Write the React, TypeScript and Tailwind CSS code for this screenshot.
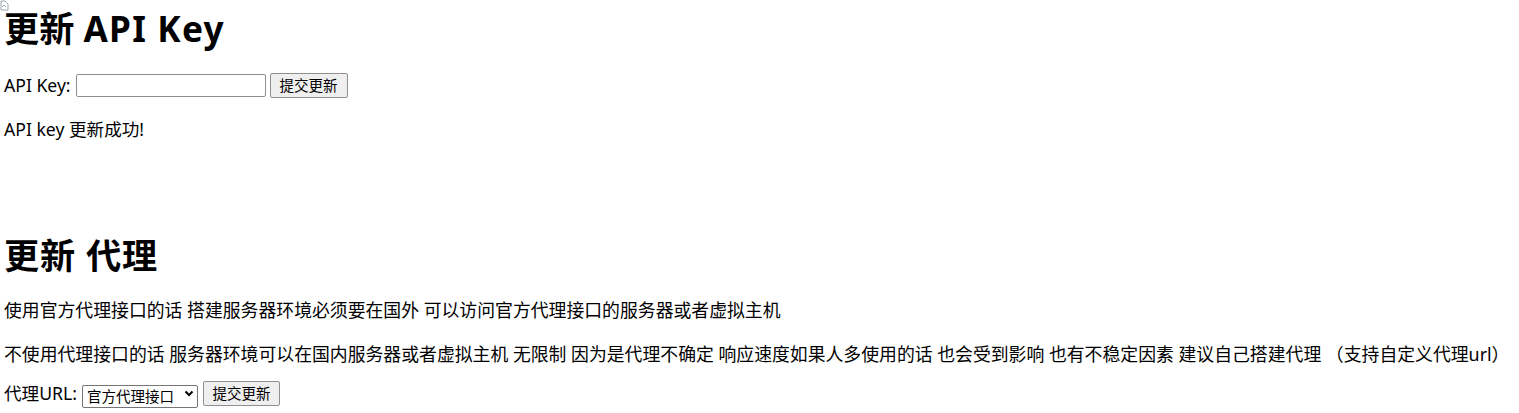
import { useState } from 'react';

const font = "font-['Noto_Sans','Noto_Sans_CJK_SC',sans-serif]";

export default function App() {
  const [key, setKey] = useState('');
  const [proxy, setProxy] = useState('official');

  return (
    <div className={`relative min-h-[413px] bg-white px-[4px] text-[17.6px] text-black ${font}`}>
      {/* broken image marker */}
      <svg className="absolute left-0 top-0" width="9" height="11" viewBox="0 0 9 11">
        <path d="M1 1h4l3 3v6H1z" fill="none" stroke="#9ca3af" strokeWidth="1" />
        <path d="M2 7l2-2 2 2" fill="none" stroke="#9ca3af" strokeWidth="1" />
      </svg>

      <h1 className="pt-[6px] text-[35.2px] font-bold leading-[44px]">
        更新 <span className="tracking-[1.2px]">API Key</span>
      </h1>

      <form className="mt-[22px] flex items-center h-[26px]" onSubmit={e => e.preventDefault()}>
        <label htmlFor="key">API Key:</label>
        <input
          id="key"
          value={key}
          onChange={e => setKey(e.target.value)}
          className="ml-[5px] h-[23px] w-[190px] rounded-[2px] border border-[#8f8f8f] px-1 text-[14px] outline-none"
        />
        <button className="ml-[4px] h-[25px] w-[78px] rounded-[2px] border border-[#8f8f8f] bg-[#efefef] text-[14.5px] leading-none">
          提交更新
        </button>
      </form>

      <p className="mt-[18px] leading-[26px]">API key 更新成功!</p>

      <h1 className="mt-[91px] text-[35.2px] font-bold leading-[44px] tracking-[0.8px]">更新 代理</h1>

      <p className="mt-[20px] text-[17.85px] leading-[26px]">使用官方代理接口的话 搭建服务器环境必须要在国外 可以访问官方代理接口的服务器或者虚拟主机</p>
      <p className="mt-[18px] whitespace-nowrap text-[17.85px] leading-[26px]">
        不使用代理接口的话 服务器环境可以在国内服务器或者虚拟主机 无限制 因为是代理不确定 响应速度如果人多使用的话 也会受到影响 也有不稳定因素 建议自己搭建代理 （支持自定义代理url）
      </p>

      <form className="mt-[13px] flex items-center h-[26px]" onSubmit={e => e.preventDefault()}>
        <label htmlFor="proxy">代理URL:</label>
        <div className="relative ml-[5px] h-[23px] w-[116px]">
          <select
            id="proxy"
            value={proxy}
            onChange={e => setProxy(e.target.value)}
            className="h-full w-full appearance-none rounded-[2px] border border-[#767676] bg-white pl-[4px] text-[14.5px]"
          >
            <option value="official">官方代理接口</option>
            <option value="none">不使用代理</option>
          </select>
          <svg className="pointer-events-none absolute right-[4px] top-[8px]" width="10" height="7" viewBox="0 0 10 7">
            <path d="M1.5 1.5l3.5 3.5 3.5-3.5" fill="none" stroke="#000" strokeWidth="2" />
          </svg>
        </div>
        <button className="ml-[5px] h-[25px] w-[77px] rounded-[2px] border border-[#8f8f8f] bg-[#efefef] text-[14.5px] leading-none">
          提交更新
        </button>
      </form>
    </div>
  );
}
